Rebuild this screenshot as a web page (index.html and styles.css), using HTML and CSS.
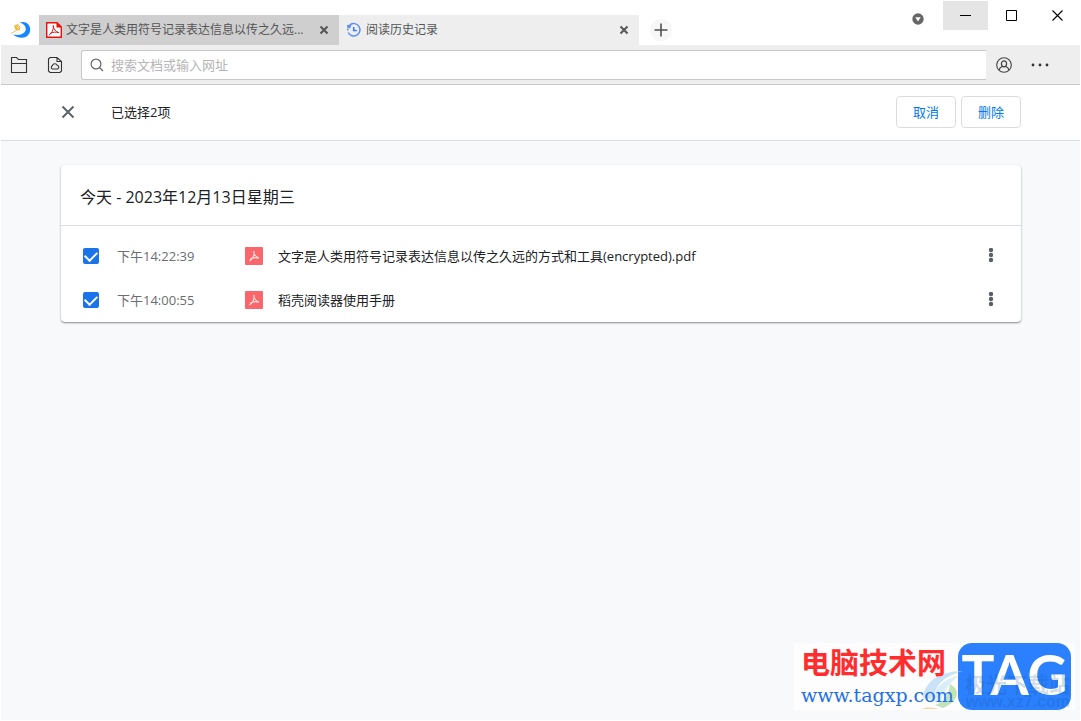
FILE: index.html
```html
<!DOCTYPE html>
<html lang="zh-CN">
<head>
<meta charset="utf-8">
<title>阅读历史记录</title>
<link rel="stylesheet" href="styles.css">
</head>
<body>
<div class="window">
  <header class="titlebar">
    <svg class="logo" width="20" height="18" viewBox="0 0 20 18" aria-hidden="true">
      <path d="M8.500 1.800C14 -.8 19.200 3.200 19.200 8.500C19.200 13.600 15.300 16.700 11 16.700C7 16.700 4 15.600 2 13.600C7.500 14.400 11.500 13.600 13.700 11C16.300 7.500 14 2.800 8.500 1.800Z" fill="#1687ff"/>
      <path d="M3 4.500L7 3L9.500 6.500L8.500 9.500L4.500 8.800Z" fill="#e9b53c"/>
      <path d="M0 12.500L7 8.500" stroke="#e8c46a" fill="none"/>
      <path d="M4.500 5L8 8M6.500 4L8.500 7" stroke="#fff3cf" stroke-width=".7" fill="none"/>
    </svg>
    <nav class="tabs">
      <div class="tab tab-idle">
        <svg width="16" height="16" viewBox="0 0 16 16" aria-hidden="true">
          <path d="M.7.7H11L15.300 5V15.300H.7Z" fill="#fff" stroke="#f20d0d" stroke-width="1.400"/>
          <path d="M10.500 0L16 5.500H10.500Z" fill="#f20d0d"/>
          <path d="M7 3.500C7.500 7 9.500 9.500 13 10.800M7.500 3.500C7.500 8 6 11 3 13.200M4 11.500C7 9.900 10 9.900 13 10.600" fill="none" stroke="#e01818"/>
        </svg>
        <a class="tab-title" href="#">文字是人类用符号记录表达信息以传之久远...</a>
        <button class="icon-button tab-close" aria-label="关闭标签页"><svg width="10" height="10" viewBox="0 0 10 10"><path d="M1.500 1.500L8.500 8.500M8.500 1.500L1.500 8.500" stroke="#555" stroke-width="2"/></svg></button>
      </div>
      <div class="tab tab-current">
        <svg width="16" height="16" viewBox="0 0 16 16" aria-hidden="true">
          <path d="M4 2.800A6.200 6.200 0 1 1 2.200 10.500M1.800 8.500V6.500" fill="none" stroke="#5c8dfb" stroke-width="1.500"/>
          <path d="M1 3L5.500 2.500L4.200 6.300L1.500 6Z" fill="#5c8dfb"/>
          <path d="M7.700 5V8.500H10.800" fill="none" stroke="#3f78fa" stroke-width="1.600"/>
        </svg>
        <a class="tab-title" href="#" aria-current="page">阅读历史记录</a>
        <button class="icon-button tab-close" aria-label="关闭标签页"><svg width="10" height="10" viewBox="0 0 10 10"><path d="M1.500 1.500L8.500 8.500M8.500 1.500L1.500 8.500" stroke="#555" stroke-width="2"/></svg></button>
      </div>
    </nav>
    <button class="icon-button new-tab" aria-label="新建标签页"><svg width="14" height="14" viewBox="0 0 14 14"><path d="M7 .5V13.500M.5 7H13.500" stroke="#505050" stroke-width="1.600"/></svg></button>
    <div class="window-controls">
      <button class="icon-button menu-toggle" aria-label="更多选项"><svg width="12" height="12" viewBox="0 0 12 12"><circle cx="6" cy="6" r="5.700" fill="#666"/><path d="M3.300 4.200H8.700L6 8.500Z" fill="#fff"/></svg></button>
      <button class="icon-button control control-hover" aria-label="最小化"><svg width="11" height="11" viewBox="0 0 11 11"><path d="M0 5.500H11" stroke="#000"/></svg></button>
      <button class="icon-button control" aria-label="最大化"><svg width="11" height="11" viewBox="0 0 11 11"><path d="M.5.5H10.500V10.500H.5Z" fill="none" stroke="#000"/></svg></button>
      <button class="icon-button control" aria-label="关闭"><svg width="11" height="11" viewBox="0 0 11 11"><path d="M.5.5L10.500 10.500M10.500.5L.5 10.500" stroke="#000" stroke-width="1.100"/></svg></button>
    </div>
  </header>

  <div class="toolbar">
    <button class="icon-button tool" aria-label="打开文件夹"><svg width="18" height="18" viewBox="0 0 18 18"><path d="M1.500 16.500V1.500H6.500L8.500 3.500H16.500V16.500ZM1.500 7.500H16.500" fill="none" stroke="#333" stroke-width="1.100"/></svg></button>
    <button class="icon-button tool" aria-label="云文档"><svg width="16" height="18" viewBox="0 0 16 18"><path d="M3 1.500H10L14.500 5.500V15L13 16.500H3L1.500 15V3ZM10 1.500V5.500H14.500" fill="none" stroke="#333" stroke-width="1.100"/><path d="M5.500 13A1.700 1.700 0 0 1 5.300 9.800A2.600 2.600 0 0 1 10.200 9.300A1.900 1.900 0 0 1 10.500 13Z" fill="none" stroke="#333" stroke-width="1.100"/></svg></button>
    <label class="search">
      <svg width="14" height="14" viewBox="0 0 14 14" aria-hidden="true"><circle cx="6" cy="6" r="4.900" fill="none" stroke="#666" stroke-width="1.200"/><path d="M9.500 9.500L13 13" stroke="#666" stroke-width="1.300"/></svg>
      <input class="search-input" type="text" aria-label="搜索" placeholder="搜索文档或输入网址">
    </label>
    <button class="icon-button tool" aria-label="账户"><svg width="16" height="16" viewBox="0 0 16 16"><g fill="none" stroke="#444"><circle cx="8" cy="8" r="7.300" stroke-width="1.100"/><ellipse cx="8" cy="6.800" rx="2.600" ry="3" stroke-width="1.200"/><path d="M3 13.200C3.500 10.700 5 10 6.500 9.300M13 13.200C12.500 10.700 11 10 9.500 9.300" stroke-width="1.200"/></g></svg></button>
    <button class="icon-button tool" aria-label="更多"><svg width="18" height="4" viewBox="0 0 18 4"><g fill="#333"><circle cx="2" cy="2" r="1.400"/><circle cx="9" cy="2" r="1.400"/><circle cx="16" cy="2" r="1.400"/></g></svg></button>
  </div>

  <section class="selection">
    <button class="icon-button clear" aria-label="清除选择"><svg width="14" height="14" viewBox="0 0 14 14"><path d="M1.500 1.500L12.500 12.500M12.500 1.500L1.500 12.500" stroke="#5f6368" stroke-width="2"/></svg></button>
    <span class="selection-count">已选择2项</span>
    <button class="action">取消</button>
    <button class="action">删除</button>
  </section>

  <main class="content">
    <section class="card">
      <h1 class="card-title">今天 - 2023年12月13日星期三</h1>
      <ul class="entries">
        <li class="entry">
          <input class="check" type="checkbox" id="entry-1" checked>
          <label class="time" for="entry-1">下午14:22:39</label>
          <svg class="pdf" width="18" height="18" viewBox="0 0 18 18" aria-hidden="true"><rect width="18" height="18" rx="1" fill="#f9666b"/><path d="M8.500 4C9 7.500 10.500 10 14 11M9 4C9.500 8.500 7.500 12 4.500 14M5 12.500C7.500 10.300 11 10.300 14 11.200" fill="none" stroke="#ffdede" stroke-width="1.100"/></svg>
          <a class="entry-title" href="#">文字是人类用符号记录表达信息以传之久远的方式和工具(encrypted).pdf</a>
          <button class="icon-button more" aria-label="更多操作"><svg width="6" height="16" viewBox="0 0 6 16"><g fill="#5a5e66"><circle cx="3" cy="2" r="2.200"/><circle cx="3" cy="7" r="2.200"/><circle cx="3" cy="12" r="2.200"/></g></svg></button>
        </li>
        <li class="entry">
          <input class="check" type="checkbox" id="entry-2" checked>
          <label class="time" for="entry-2">下午14:00:55</label>
          <svg class="pdf" width="18" height="18" viewBox="0 0 18 18" aria-hidden="true"><rect width="18" height="18" rx="1" fill="#f9666b"/><path d="M8.500 4C9 7.500 10.500 10 14 11M9 4C9.500 8.500 7.500 12 4.500 14M5 12.500C7.500 10.300 11 10.300 14 11.200" fill="none" stroke="#ffdede" stroke-width="1.100"/></svg>
          <a class="entry-title" href="#">稻壳阅读器使用手册</a>
          <button class="icon-button more" aria-label="更多操作"><svg width="6" height="16" viewBox="0 0 6 16"><g fill="#5a5e66"><circle cx="3" cy="2" r="2.200"/><circle cx="3" cy="7" r="2.200"/><circle cx="3" cy="12" r="2.200"/></g></svg></button>
        </li>
      </ul>
    </section>
  </main>

  <aside class="watermark">
    <svg class="swoosh" width="42" height="40" viewBox="0 0 42 40" aria-hidden="true">
      <path d="M2 28C4 10 20 1 42 1C24 6 14 14 12 29Z" fill="#a9d0f5" opacity=".6"/>
      <path d="M8 31C14 17 24 9 38 5C29 13 21 22 20 33Z" fill="#d6ecfa" opacity=".9"/>
      <path d="M14 35C24 32 28 24 29 14C40 20 38 31 22 38Z" fill="#b9e0b4" opacity=".9"/>
      <path d="M1 39C7 36 14 38 18 39Z" fill="#f5c98d" opacity=".8"/>
    </svg>
    <div class="site">
      <span class="site-name">电脑技术网</span>
      <span class="site-url">www.tagxp.com</span>
    </div>
    <div class="badge">TAG</div>
    <div class="ghost">
      <span class="ghost-name">极光下载站</span>
      <span class="ghost-url">www.xz7.com</span>
    </div>
  </aside>
</div>
</body>
</html>
```

FILE: styles.css
```css
* { box-sizing: border-box; }

body {
  margin: 0;
  background: #fff;
  color: #202124;
  font: 13px/20px "Open Sans", "Noto Sans CJK SC", sans-serif;
}

button, input { font: inherit; }
a { color: inherit; text-decoration: none; }
svg { display: block; flex: none; }

.window {
  display: flex;
  flex-direction: column;
  min-height: 100vh;
  padding: 0 1px 1px;
}

.icon-button {
  display: flex;
  flex: none;
  align-items: center;
  justify-content: center;
  padding: 0;
  border: 0;
  background: none;
}

.titlebar {
  display: flex;
  align-items: flex-end;
  height: 45px;
}
.logo { margin: 0 8px 6px 10px; }
.tabs { display: flex; }
.tab {
  display: flex;
  align-items: center;
  width: 300px;
  height: 30px;
  padding: 0 10px 0 7px;
  color: #555;
  font-size: 12px;
}
.tab-idle { background: #cfcfcf; }
.tab-current { background: #eee; }
.tab-title {
  flex: 1;
  margin-left: 4px;
  white-space: nowrap;
}
.new-tab {
  width: 22px;
  height: 22px;
  margin: 0 0 4px 11px;
  border-radius: 50%;
  background: #f7f7f7;
}
.window-controls {
  display: flex;
  align-self: flex-start;
  margin-left: auto;
  padding-top: 1px;
}
.menu-toggle { margin: 6px 19px 0 0; }
.control { width: 46px; height: 29px; }
.control-hover { width: 45px; background: #e5e5e5; }

.toolbar {
  display: flex;
  align-items: center;
  height: 40px;
  border-bottom: 1px solid #c8c8c8;
  background: #eee;
}
.tool { width: 36px; height: 30px; }
.search {
  display: flex;
  flex: 1;
  align-items: center;
  height: 30px;
  margin-left: 8px;
  padding-left: 8px;
  border: 1px solid #c8c8c8;
  border-right: 0;
  border-radius: 3px 0 0 3px;
  background: #fff;
}
.search-input {
  flex: 1;
  min-width: 0;
  margin-left: 7px;
  padding: 0;
  border: 0;
  outline: 0;
  background: none;
}
.search-input::placeholder { color: #b5b5b5; opacity: 1; }
.toolbar .tool:last-child { margin-right: 22px; }

.selection {
  display: flex;
  align-items: center;
  gap: 5px;
  height: 56px;
  padding: 0 59px 2px 60px;
  border-bottom: 1px solid #dadce0;
}
.clear { width: 14px; }
.selection-count { flex: 1; margin-left: 31px; }
.action {
  width: 60px;
  height: 32px;
  padding: 0;
  border: 1px solid #dadce0;
  border-radius: 4px;
  background: #fff;
  color: #0078f0;
}

.content {
  flex: 1;
  padding: 24px 59px 24px 60px;
  background: #f8f9fb;
}
.card {
  border-radius: 4px;
  background: #fff;
  box-shadow: 0 1px 2px rgba(60, 64, 67, .5), 0 1px 1px rgba(60, 64, 67, .15);
}
.card-title {
  margin: 0;
  padding: 22px 19px 18px;
  border-bottom: 1px solid #dadce0;
  font-size: 16px;
  font-weight: 400;
  line-height: 20px;
}
.entries { margin: 0; padding: 8px 0 0; list-style: none; }
.entry {
  display: flex;
  align-items: center;
  height: 44px;
  padding: 0 27px 0 22px;
}
.check {
  display: grid;
  flex: none;
  width: 16px;
  height: 16px;
  margin: 0;
  place-items: center;
  appearance: none;
  border-radius: 2px;
  background: #d2e3fc;
}
.check:checked { background: #1a73e8; }
.check:checked::after {
  content: "";
  width: 10px;
  height: 6px;
  margin-bottom: 3px;
  border: solid #fff;
  border-width: 0 0 2px 2px;
  transform: rotate(-45deg);
}
.time { width: 128px; margin-left: 18px; color: #6a6d72; }
.entry-title { flex: 1; margin-left: 15px; }

.watermark {
  position: absolute;
  right: 6px;
  bottom: 11px;
  display: flex;
  width: 281px;
  height: 67px;
  padding-left: 7px;
  background: #fdfdfd;
  white-space: nowrap;
}
.site { z-index: 1; display: flex; flex-direction: column; width: 157px; }
.site-name {
  color: #ff2d2d;
  font: bold 29px/36px "Noto Sans CJK SC", sans-serif;
}
.site-url {
  color: #1f70e8;
  font: 19px/32px "DejaVu Serif", serif;
}
.badge {
  width: 113px;
  border-radius: 14px;
  background: #2b80ff;
  color: #fff;
  font: bold 55px/62px Lato, sans-serif;
  text-align: center;
}
.swoosh { position: absolute; right: 112px; bottom: 0; }
.ghost {
  position: absolute;
  right: 5px;
  bottom: 0;
  display: flex;
  flex-direction: column;
  align-items: flex-end;
  color: rgba(15, 75, 130, .2);
}
.ghost-name { font: bold 21px/22px "Noto Sans CJK SC", sans-serif; }
.ghost-url { font: bold 16px/16px "Liberation Sans", sans-serif; }
```
